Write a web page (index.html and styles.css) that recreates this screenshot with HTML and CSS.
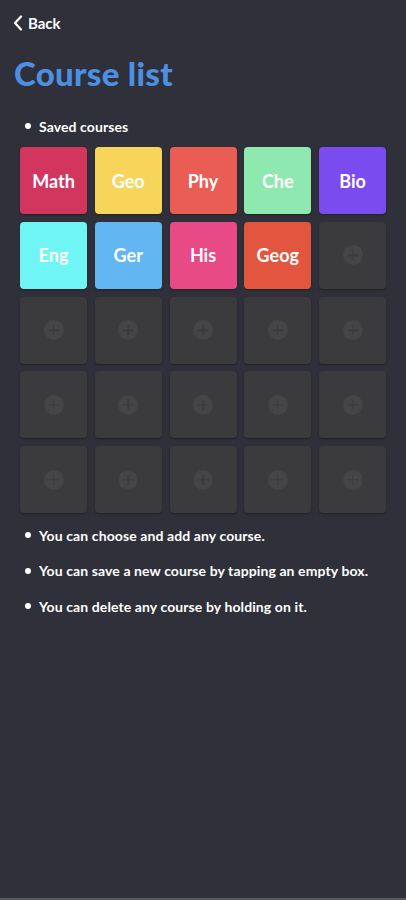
FILE: index.html
```html
<!DOCTYPE html>
<html>
<head>
<meta charset="utf-8">
<link rel="stylesheet" href="styles.css">
</head>
<body>
<div class="page">
  <div class="back">
    <svg class="chev" width="10" height="16" viewBox="0 0 10 16"><path d="M8 1.5 L2 8 L8 14.5" fill="none" stroke="#fff" stroke-width="2.2" stroke-linecap="round" stroke-linejoin="round"/></svg>
    <span>Back</span>
  </div>
  <h1 class="title">Course list</h1>
  <div class="bullet head"><span class="dot"></span>Saved courses</div>
  <div class="grid">
    <div class="tile c-math">Math</div>
    <div class="tile c-geo">Geo</div>
    <div class="tile c-phy">Phy</div>
    <div class="tile c-che">Che</div>
    <div class="tile c-bio">Bio</div>
    <div class="tile c-eng">Eng</div>
    <div class="tile c-ger">Ger</div>
    <div class="tile c-his">His</div>
    <div class="tile c-geog">Geog</div>
    <div class="tile empty"><span class="plus"></span></div>
    <div class="tile empty"><span class="plus"></span></div>
    <div class="tile empty"><span class="plus"></span></div>
    <div class="tile empty"><span class="plus"></span></div>
    <div class="tile empty"><span class="plus"></span></div>
    <div class="tile empty"><span class="plus"></span></div>
    <div class="tile empty"><span class="plus"></span></div>
    <div class="tile empty"><span class="plus"></span></div>
    <div class="tile empty"><span class="plus"></span></div>
    <div class="tile empty"><span class="plus"></span></div>
    <div class="tile empty"><span class="plus"></span></div>
    <div class="tile empty"><span class="plus"></span></div>
    <div class="tile empty"><span class="plus"></span></div>
    <div class="tile empty"><span class="plus"></span></div>
    <div class="tile empty"><span class="plus"></span></div>
    <div class="tile empty"><span class="plus"></span></div>
  </div>
  <div class="notes">
    <div class="bullet"><span class="dot"></span>You can choose and add any course.</div>
    <div class="bullet"><span class="dot"></span>You can save a new course by tapping an empty box.</div>
    <div class="bullet"><span class="dot"></span>You can delete any course by holding on it.</div>
  </div>
</div>
</body>
</html>
```
FILE: styles.css
```css
html, body {
  margin: 0;
  padding: 0;
  background: #2f3039;
}
body {
  width: 406px;
  height: 900px;
  overflow: hidden;
  font-family: "Lato", "Liberation Sans", sans-serif;
  color: #fff;
}
.page {
  height: 898px;
  border-bottom: 2px solid #5a5b61;
  padding: 0 20px;
}
.back {
  display: flex;
  align-items: center;
  gap: 5px;
  padding-top: 13px;
  margin-left: -7px;
  height: 20px;
  font-size: 15px;
  font-weight: 700;
}
.chev { display: block; }
.title {
  margin: 20px 0 0 -6px;
  font-size: 33px;
  line-height: 40px;
  font-weight: 900;
  color: #4d8fe0;
  letter-spacing: 0.3px;
}
.bullet {
  display: flex;
  align-items: center;
  font-size: 14px;
  font-weight: 700;
  height: 18px;
  letter-spacing: 0.1px;
}
.dot {
  width: 6px;
  height: 6px;
  border-radius: 50%;
  background: #fff;
  margin: 0 8px 0 5px;
}
.head {
  margin-top: 24px;
}
.grid {
  margin-top: 12px;
  width: 366px;
  display: grid;
  grid-template-columns: repeat(5, 67px);
  grid-auto-rows: 67px;
  column-gap: 7.75px;
  row-gap: 7.75px;
}
.tile {
  border-radius: 4px;
  display: flex;
  align-items: center;
  justify-content: center;
  font-size: 18px;
  font-weight: 700;
  color: #fff;
  box-shadow: 0 1px 2px rgba(0,0,0,0.35);
}
.c-math { background: #d2365f; }
.c-geo { background: #f7d55a; }
.c-phy { background: #ea5d55; }
.c-che { background: #8fe8b0; }
.c-bio { background: #7a4cf0; }
.c-eng { background: #6ff6f4; }
.c-ger { background: #62b7f3; }
.c-his { background: #e84a86; }
.c-geog { background: #e2553f; }
.empty { background: #3b3b3d; }
.plus {
  width: 20px;
  height: 20px;
  border-radius: 50%;
  background: #454547;
  position: relative;
}
.plus::before, .plus::after {
  content: "";
  position: absolute;
  background: #3b3b3d;
  left: 50%;
  top: 50%;
  transform: translate(-50%, -50%);
}
.plus::before { width: 10px; height: 1.5px; }
.plus::after { width: 1.5px; height: 10px; }
.notes {
  margin-top: 13px;
  display: flex;
  flex-direction: column;
  gap: 17.5px;
}
```
